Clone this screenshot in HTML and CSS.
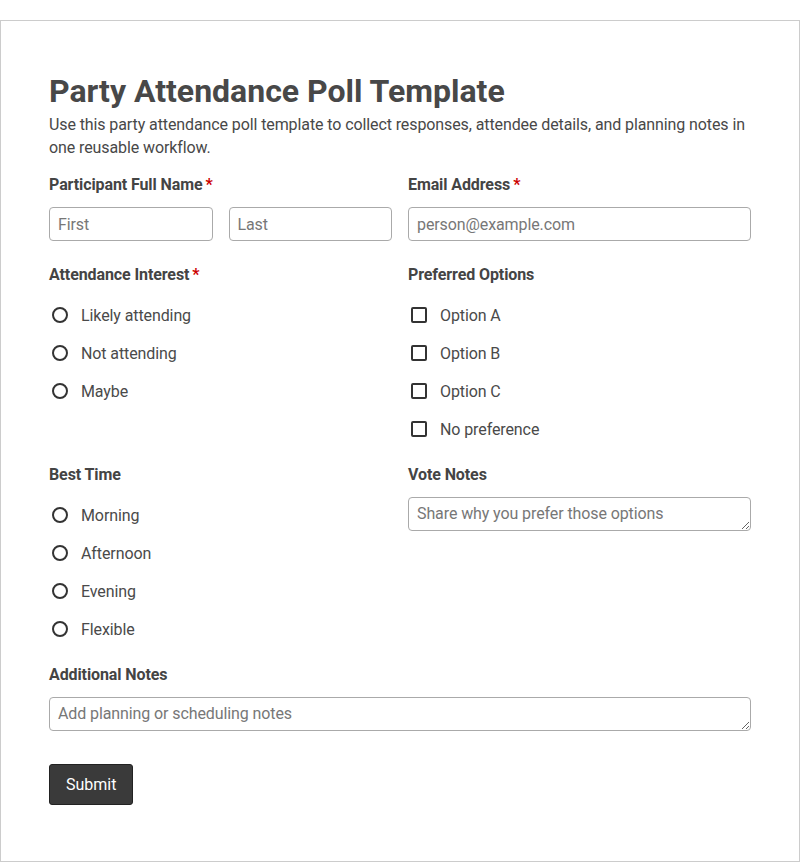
FILE: index.html
```html
<!DOCTYPE html>
<html lang="en">
<head>
  <meta charset="UTF-8">
  <meta name="viewport" content="width=device-width, initial-scale=1.0">
  <title>Party Attendance Poll Template</title>
  <link rel="stylesheet" href="styles.css">
</head>
<body>
  <form class="poll">
    <h1>Party Attendance Poll Template</h1>
    <p class="intro">Use this party attendance poll template to collect responses, attendee details, and planning notes in one reusable workflow.</p>

    <div class="fields">
      <div class="field">
        <label class="label">Participant Full Name<span class="req">*</span></label>
        <div class="name-row">
          <input type="text" class="input" placeholder="First">
          <input type="text" class="input" placeholder="Last">
        </div>
      </div>
      <div class="field">
        <label class="label">Email Address<span class="req">*</span></label>
        <input type="email" class="input" placeholder="person@example.com">
      </div>

      <div class="field">
        <div class="label">Attendance Interest<span class="req">*</span></div>
        <div class="options">
          <label class="option"><input type="radio" name="attend">Likely attending</label>
          <label class="option"><input type="radio" name="attend">Not attending</label>
          <label class="option"><input type="radio" name="attend">Maybe</label>
        </div>
      </div>
      <div class="field">
        <div class="label">Preferred Options</div>
        <div class="options">
          <label class="option"><input type="checkbox">Option A</label>
          <label class="option"><input type="checkbox">Option B</label>
          <label class="option"><input type="checkbox">Option C</label>
          <label class="option"><input type="checkbox">No preference</label>
        </div>
      </div>

      <div class="field">
        <div class="label">Best Time</div>
        <div class="options">
          <label class="option"><input type="radio" name="time">Morning</label>
          <label class="option"><input type="radio" name="time">Afternoon</label>
          <label class="option"><input type="radio" name="time">Evening</label>
          <label class="option"><input type="radio" name="time">Flexible</label>
        </div>
      </div>
      <div class="field">
        <label class="label">Vote Notes</label>
        <textarea class="input area" rows="1" placeholder="Share why you prefer those options"></textarea>
      </div>

      <div class="field wide">
        <label class="label">Additional Notes</label>
        <textarea class="input area" rows="1" placeholder="Add planning or scheduling notes"></textarea>
      </div>
    </div>

    <button type="submit" class="submit">Submit</button>
  </form>
</body>
</html>
```

FILE: styles.css
```css
html, body {
  margin: 0;
  padding: 0;
  background: #fff;
  font-family: Roboto, "Liberation Sans", sans-serif;
  color: #444;
  letter-spacing: -0.1px;
}
.poll {
  box-sizing: border-box;
  width: 100%;
  margin-top: 20px;
  padding: 50px 48px 56px;
  border: 1px solid #ccc;
}
h1 {
  margin: 0 0 2px;
  font-size: 32px;
  line-height: 40px;
  font-weight: 700;
  color: #484848;
  letter-spacing: 0;
}
.intro {
  margin: 0;
  font-size: 16px;
  line-height: 23px;
  color: #484848;
}
.fields {
  display: grid;
  grid-template-columns: 1fr 1fr;
  column-gap: 16px;
  row-gap: 24px;
  margin-top: 16px;
}
.wide {
  grid-column: 1 / 3;
}
.label {
  display: block;
  font-size: 16px;
  line-height: 20px;
  font-weight: 700;
  margin-bottom: 12px;
  color: #444;
}
.req {
  color: #c00;
  margin-left: 3px;
}
.name-row {
  display: flex;
  gap: 16px;
}
.name-row .input {
  flex: 1;
  min-width: 0;
}
.input {
  display: block;
  box-sizing: border-box;
  width: 100%;
  height: 34px;
  margin: 0;
  padding: 0 8px;
  border: 1px solid #aaa;
  border-radius: 4px;
  font-family: inherit;
  font-size: 16px;
  letter-spacing: -0.1px;
  color: #444;
  background: #fff;
}
.input::placeholder {
  color: #777;
}
.area {
  padding: 6px 8px;
  line-height: 20px;
  resize: vertical;
}
.options {
  padding: 7px 0 1px;
}
.option {
  display: flex;
  align-items: center;
  height: 22px;
  margin-bottom: 16px;
  font-size: 16px;
  color: #4a4a4a;
}
.option:last-child {
  margin-bottom: 0;
}
.option input {
  appearance: none;
  -webkit-appearance: none;
  box-sizing: border-box;
  width: 16px;
  height: 16px;
  margin: 0 13px 0 3px;
  border: 2px solid #333;
  background: #fff;
}
.option input[type="radio"] {
  border-radius: 50%;
}
.option input[type="checkbox"] {
  border-radius: 2px;
}
.submit {
  display: block;
  margin-top: 33px;
  padding: 10px 16px;
  border: 1px solid #222;
  border-radius: 3px;
  background: #3a3a3a;
  color: #fff;
  font-family: inherit;
  font-size: 16px;
  line-height: 19px;
}
```
